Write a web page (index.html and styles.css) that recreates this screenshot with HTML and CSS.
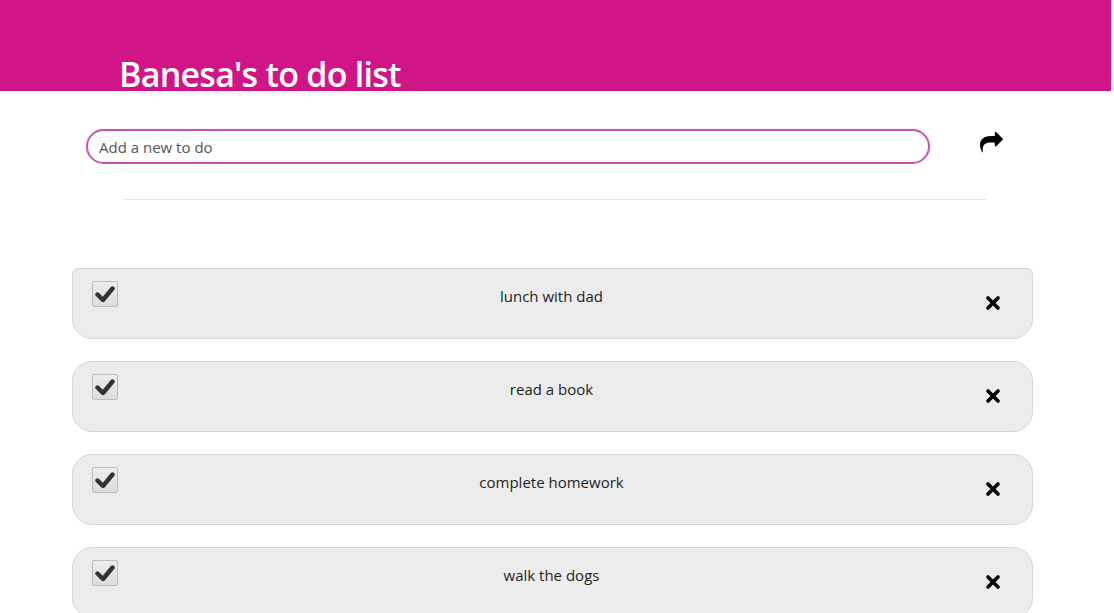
FILE: index.html
```html
<!DOCTYPE html>
<html>
<head>
<meta charset="utf-8">
<title>Banesa's to do list</title>
<link rel="stylesheet" href="styles.css">
</head>
<body>
<header class="banner">
  <h1 class="title">Banesa's to do list</h1>
</header>
<main class="page">
  <form class="add-form">
    <input class="add-input" type="text" placeholder="Add a new to do">
    <button class="add-btn" type="button" aria-label="Add">
      <svg viewBox="0 0 1792 1792" width="23" height="23"><path d="M1792 640q0 26-19 45l-512 512q-19 19-45 19t-45-19-19-45v-256h-224q-98 0-175.5 6t-154 21.5-133 42.5-105.5 69.5-80 101-48.5 138.5-17.5 181q0 55 5 123 0 6 2.5 23.5t2.5 26.5q0 15-8.5 25t-23.5 10q-16 0-28-17-7-9-13-22t-13.5-30-10.5-24q-127-285-127-451 0-199 53-333 162-403 875-403h224v-256q0-26 19-45t45-19 45 19l512 512q19 19 19 45z" fill="#000"/></svg>
    </button>
  </form>
  <hr class="divider">
  <ul class="todo-list">
    <li class="todo first">
      <span class="check"><svg viewBox="0 0 20 20" width="20" height="20"><path d="M2.5 10.5 L8 16 L17.5 4.5" fill="none" stroke="#333" stroke-width="4.4" stroke-linecap="round" stroke-linejoin="round"/></svg></span>
      <span class="todo-text">lunch with dad</span>
      <span class="remove"><svg viewBox="0 0 16 16" width="16" height="16"><path d="M3 3 L13 13 M13 3 L3 13" stroke="#000" stroke-width="3.6" stroke-linecap="round"/></svg></span>
    </li>
    <li class="todo">
      <span class="check"><svg viewBox="0 0 20 20" width="20" height="20"><path d="M2.5 10.5 L8 16 L17.5 4.5" fill="none" stroke="#333" stroke-width="4.4" stroke-linecap="round" stroke-linejoin="round"/></svg></span>
      <span class="todo-text">read a book</span>
      <span class="remove"><svg viewBox="0 0 16 16" width="16" height="16"><path d="M3 3 L13 13 M13 3 L3 13" stroke="#000" stroke-width="3.6" stroke-linecap="round"/></svg></span>
    </li>
    <li class="todo">
      <span class="check"><svg viewBox="0 0 20 20" width="20" height="20"><path d="M2.5 10.5 L8 16 L17.5 4.5" fill="none" stroke="#333" stroke-width="4.4" stroke-linecap="round" stroke-linejoin="round"/></svg></span>
      <span class="todo-text">complete homework</span>
      <span class="remove"><svg viewBox="0 0 16 16" width="16" height="16"><path d="M3 3 L13 13 M13 3 L3 13" stroke="#000" stroke-width="3.6" stroke-linecap="round"/></svg></span>
    </li>
    <li class="todo">
      <span class="check"><svg viewBox="0 0 20 20" width="20" height="20"><path d="M2.5 10.5 L8 16 L17.5 4.5" fill="none" stroke="#333" stroke-width="4.4" stroke-linecap="round" stroke-linejoin="round"/></svg></span>
      <span class="todo-text">walk the dogs</span>
      <span class="remove"><svg viewBox="0 0 16 16" width="16" height="16"><path d="M3 3 L13 13 M13 3 L3 13" stroke="#000" stroke-width="3.6" stroke-linecap="round"/></svg></span>
    </li>
  </ul>
</main>
</body>
</html>
```
FILE: styles.css
```css
html, body {
  margin: 0;
  padding: 0;
  background: #fff;
  font-family: "Open Sans", "Noto Sans", sans-serif;
  overflow: hidden;
}

.banner {
  background: #d01587;
  height: 91px;
  margin-right: 3px;
  box-sizing: border-box;
  padding: 59px 0 0 119px;
}

.title {
  margin: 0;
  color: #fff;
  font-size: 34px;
  font-weight: 600;
  line-height: 30px;
  letter-spacing: -0.75px;
}

.page {
  padding-top: 38px;
}

.add-form {
  display: flex;
  align-items: center;
  margin: 0 0 0 86px;
}

.add-input {
  width: 844px;
  height: 35px;
  box-sizing: border-box;
  border: 2px solid #c455b1;
  border-radius: 18px;
  padding: 0 11px;
  font-family: "Open Sans", "Noto Sans", sans-serif;
  font-size: 15px;
  color: #333;
  outline: none;
}

.add-input::placeholder {
  color: #555;
}

.add-btn {
  border: 0;
  background: none;
  padding: 0;
  margin: -8px 0 0 50px;
  display: flex;
  cursor: pointer;
}

.divider {
  border: 0;
  border-top: 1px solid #e3e3e3;
  margin: 35px 0 0 124px;
  width: 862px;
}

.todo-list {
  list-style: none;
  margin: 68px 0 0 72px;
  padding: 0;
  width: 961px;
  display: flex;
  flex-direction: column;
  gap: 22px;
}

.todo {
  position: relative;
  height: 71px;
  box-sizing: border-box;
  background: #ececec;
  border: 1px solid #d6d6d6;
  border-radius: 20px;
  display: flex;
  align-items: flex-start;
}

.todo.first {
  border-radius: 6px 6px 20px 20px;
}

.check {
  width: 26px;
  height: 26px;
  box-sizing: border-box;
  margin: 12px 0 0 19px;
  border: 1px solid #bdbdbd;
  border-radius: 2px;
  background: linear-gradient(#ededed, #dcdcdc);
  display: flex;
  align-items: center;
  justify-content: center;
  flex: none;
}

.todo-text {
  flex: 1;
  text-align: center;
  font-size: 15px;
  color: #1e1e1e;
  margin-top: 17px;
  line-height: 20px;
}

.remove {
  display: flex;
  margin: 26px 31px 0 0;
  flex: none;
}
```
